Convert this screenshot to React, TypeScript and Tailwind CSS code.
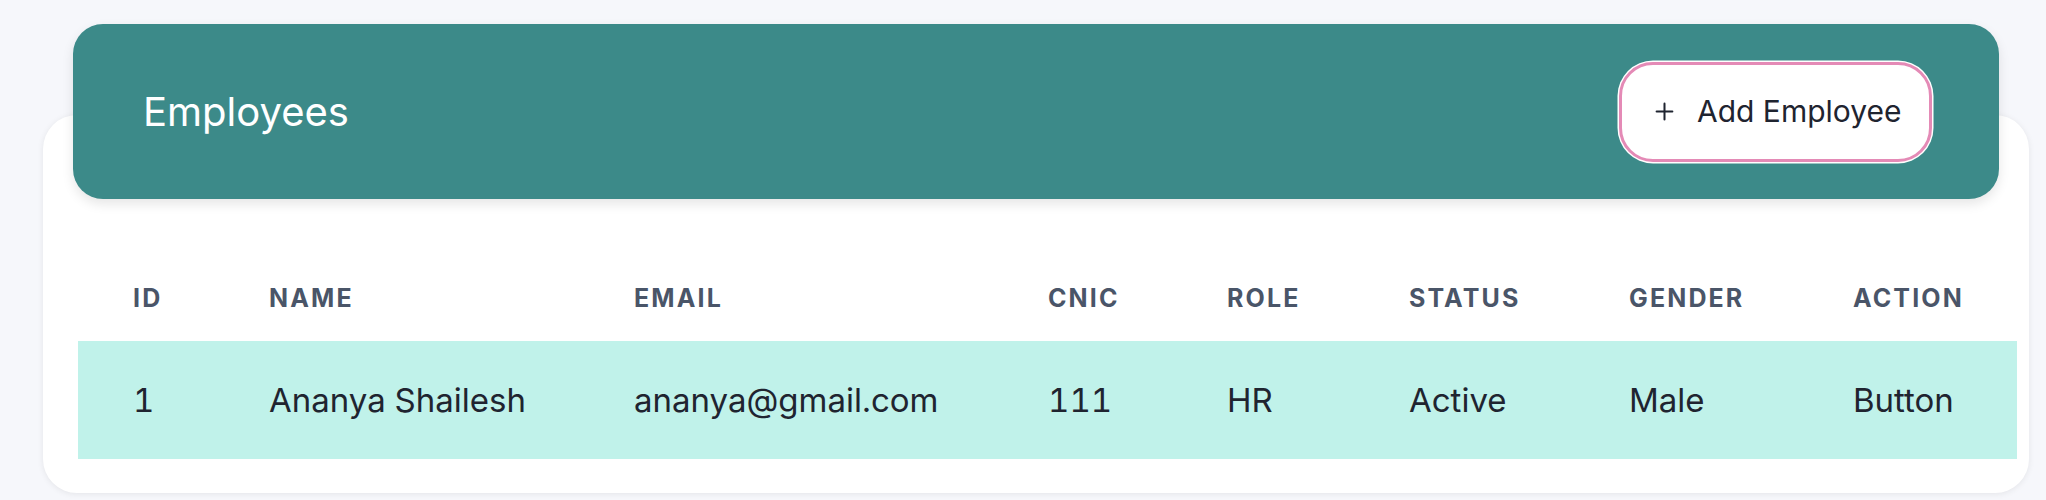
import { Plus } from "lucide-react"

const columns = ["ID", "Name", "Email", "CNIC", "Role", "Status", "Gender", "Action"]

const employees = [
  { id: 1, name: "Ananya Shailesh", email: "ananya@gmail.com", cnic: "111", role: "HR", status: "Active", gender: "Male" },
]

// same track sizes for the head row and the body rows
const grid = "grid grid-cols-[136px_365px_414px_179px_182px_220px_224px_219px]"

export default function App() {
  return (
    <div className="min-h-screen bg-[#f6f7fb] pt-[24px] pl-[43px] pr-[17px] pb-[10px] font-['Inter',sans-serif]">
      {/* Kort-topp */}
      <div className="relative z-10 mx-[30px] flex h-[175px] items-center justify-between rounded-[30px] bg-[#3c8a89] pl-[70px] pr-[67px] shadow-[0_5px_12px_rgba(0,0,0,0.1)]">
        <h1 className="text-[40px] font-normal text-white">Employees</h1>
        <button className="flex h-[100px] w-[313px] items-center rounded-[34px] border-[3px] border-[#e48ab6] bg-white pl-[29px] text-[30px] text-[#1f2430] shadow-[0_0_0_1.5px_#ffffff]">
          <Plus className="h-[27px] w-[27px]" strokeWidth={1.8} />
          <span className="ml-[19px]">Add Employee</span>
        </button>
      </div>

      {/* Tabell */}
      <div className="-mt-[84px] rounded-[34px] bg-white pt-[137px] pb-[34px] pl-[35px] pr-[12px] shadow-[0_1px_6px_rgba(0,0,0,0.08)]">
        <div className={`${grid} h-[89px] items-center pt-[5px]`}>
          {columns.map((c) => (
            <div key={c} className="pl-[55px] text-[25px] font-bold uppercase tracking-[0.085em] text-[#4a5568]">
              {c}
            </div>
          ))}
        </div>
        {employees.map((e) => (
          <div key={e.id} className={`${grid} h-[118px] items-center bg-[#c0f2ea] pt-[2px] text-[33px] tabular-nums text-[#1f2430]`}>
            <div className="pl-[55px]">{e.id}</div>
            <div className="pl-[55px]">{e.name}</div>
            <div className="pl-[55px]">{e.email}</div>
            <div className="pl-[55px]">{e.cnic}</div>
            <div className="pl-[55px]">{e.role}</div>
            <div className="pl-[55px]">{e.status}</div>
            <div className="pl-[55px]">{e.gender}</div>
            <div className="pl-[55px]">Button</div>
          </div>
        ))}
      </div>
    </div>
  )
}
